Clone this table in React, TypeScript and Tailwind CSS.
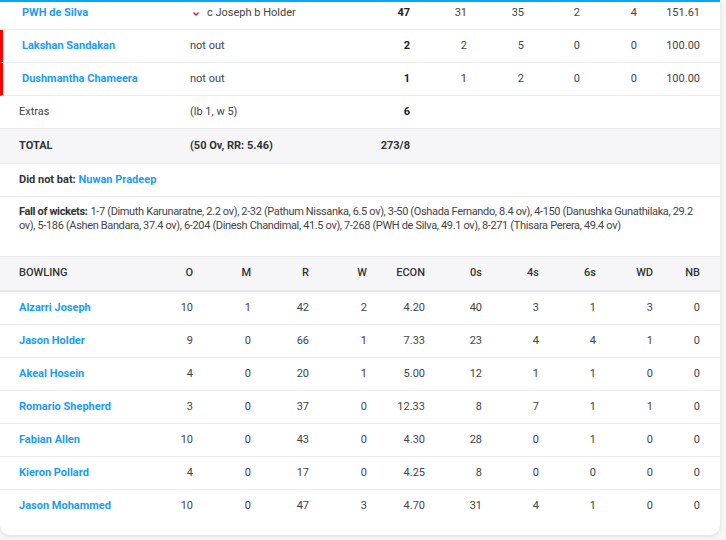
import React from "react";

const BLUE = "text-[#1d9bf0]";

type Bat = { name: string; dis: string; arrow?: boolean; notOut?: boolean; r: string; b: string; m: string; f: string; s: string; sr: string };

const bats: Bat[] = [
  { name: "PWH de Silva", dis: "c Joseph b Holder", arrow: true, r: "47", b: "31", m: "35", f: "2", s: "4", sr: "151.61" },
  { name: "Lakshan Sandakan", dis: "not out", notOut: true, r: "2", b: "2", m: "5", f: "0", s: "0", sr: "100.00" },
  { name: "Dushmantha Chameera", dis: "not out", notOut: true, r: "1", b: "1", m: "2", f: "0", s: "0", sr: "100.00" },
];

const bowlers = [
  ["Alzarri Joseph", "10", "1", "42", "2", "4.20", "40", "3", "1", "3", "0"],
  ["Jason Holder", "9", "0", "66", "1", "7.33", "23", "4", "4", "1", "0"],
  ["Akeal Hosein", "4", "0", "20", "1", "5.00", "12", "1", "1", "0", "0"],
  ["Romario Shepherd", "3", "0", "37", "0", "12.33", "8", "7", "1", "1", "0"],
  ["Fabian Allen", "10", "0", "43", "0", "4.30", "28", "0", "1", "0", "0"],
  ["Kieron Pollard", "4", "0", "17", "0", "4.25", "8", "0", "0", "0", "0"],
  ["Jason Mohammed", "10", "0", "47", "3", "4.70", "31", "4", "1", "0", "0"],
];

const bowlHead = ["O", "M", "R", "W", "ECON", "0s", "4s", "6s", "WD", "NB"];
const bowlW = ["w-[58px]", "w-[58px]", "w-[58px]", "w-[58px]", "w-[58px]", "w-[57px]", "w-[57px]", "w-[57px]", "w-[57px]", "w-[47px]"];

function BatCells({ r, b, m, f, s, sr }: { r: string; b: string; m: string; f: string; s: string; sr: string }) {
  return (
    <>
      <div className="w-[57px] text-right font-bold text-[#222]">{r}</div>
      <div className="w-[57px] text-right">{b}</div>
      <div className="w-[57px] text-right">{m}</div>
      <div className="w-[56px] text-right">{f}</div>
      <div className="w-[57px] text-right">{s}</div>
      <div className="w-[63px] text-right">{sr}</div>
    </>
  );
}

export default function App() {
  return (
    <div className="w-[726px] min-h-[540px] bg-[#f7f7f7] text-[11px] text-[#444]" style={{ fontFamily: "Roboto, 'Liberation Sans', sans-serif" }}>
      <div className="w-[720px] bg-white border-t-2 border-[#03a9f4] rounded-b-[10px] shadow-[0_1px_4px_rgba(0,0,0,0.12)] pb-[12px]">
        {bats.map((p, i) => (
          <div
            key={p.name}
            className={
              "flex items-center pr-[20px] border-b border-[#ebebeb] " +
              (i === 0 ? "h-[28px] pb-[4px] " : "h-[33px] ") +
              (p.notOut ? "border-l-[3px] border-l-[#ff0000] pl-[19px]" : "pl-[22px]")
            }
          >
            <div className={"w-[168px] font-bold " + BLUE}>{p.name}</div>
            <div className="flex-1 flex items-center">
              {p.arrow && (
                <svg width="6" height="4" viewBox="0 0 6 4" className="ml-[3px] mr-[8px]">
                  <path d="M0.5 0.5 L3 3 L5.5 0.5" stroke="#e0112b" strokeWidth="1.4" fill="none" />
                </svg>
              )}
              <span>{p.dis}</span>
            </div>
            <BatCells r={p.r} b={p.b} m={p.m} f={p.f} s={p.s} sr={p.sr} />
          </div>
        ))}
        <div className="flex items-center h-[33px] pl-[19px] pr-[20px] border-b border-[#ebebeb]">
          <div className="w-[171px]">Extras</div>
          <div className="flex-1">(lb 1, w 5)</div>
          <div className="w-[57px] text-right font-bold text-[#222]">6</div>
          <div className="w-[290px]" />
        </div>
        <div className="flex items-center h-[35px] pl-[19px] pr-[20px] bg-[#f6f6f8] border-b border-[#ebebeb] font-bold text-[#333]">
          <div className="w-[171px]">TOTAL</div>
          <div className="flex-1">(50 Ov, RR: 5.46)</div>
          <div className="w-[57px] text-right">273/8</div>
          <div className="w-[290px]" />
        </div>
        <div className="flex items-center h-[33px] pl-[19px] border-b border-[#ebebeb]">
          <span className="font-bold text-[#333]">Did not bat:&nbsp;</span>
          <span className={"font-bold " + BLUE}>Nuwan Pradeep</span>
        </div>
        <div className="h-[60px] pl-[19px] pr-[22px] pt-[8px] text-[11px] tracking-[-0.35px] leading-[14px] border-b border-[#ebebeb]">
          <span className="font-bold text-[#333] mr-[3px]">Fall of wickets:</span>
          1-7 (Dimuth Karunaratne, 2.2 ov), 2-32 (Pathum Nissanka, 6.5 ov), 3-50 (Oshada Fernando, 8.4 ov), 4-150 (Danushka Gunathilaka, 29.2 ov), 5-186 (Ashen Bandara, 37.4 ov), 6-204 (Dinesh Chandimal, 41.5 ov), 7-268 (PWH de Silva, 49.1 ov), 8-271 (Thisara Perera, 49.4 ov)
        </div>
        <div className="flex items-center h-[35px] pl-[19px] pr-[20px] bg-[#f6f6f8] border-b-2 border-[#e8e8ea] font-medium text-[#333]">
          <div className="flex-1">BOWLING</div>
          {bowlHead.map((h, i) => (
            <div key={h} className={bowlW[i] + " text-right"}>{h}</div>
          ))}
        </div>
        {bowlers.map((row, ri) => (
          <div
            key={row[0]}
            className={"flex items-center h-[33px] pl-[19px] pr-[20px] " + (ri < bowlers.length - 1 ? "border-b border-[#ebebeb]" : "")}
          >
            <div className={"flex-1 font-bold " + BLUE}>{row[0]}</div>
            {row.slice(1).map((v, i) => (
              <div key={i} className={bowlW[i] + " text-right"}>{v}</div>
            ))}
          </div>
        ))}
      </div>
    </div>
  );
}
